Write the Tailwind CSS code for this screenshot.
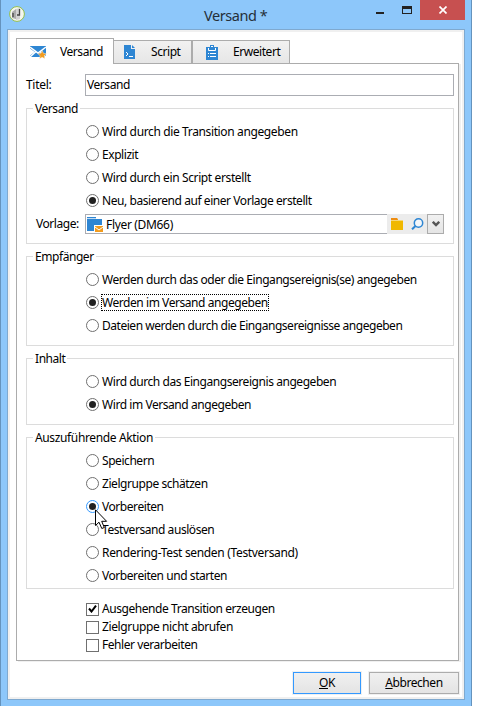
<!DOCTYPE html>
<html lang="de">
<head>
<meta charset="utf-8">
<title>Versand</title>
<script src="https://cdn.jsdelivr.net/npm/@tailwindcss/browser@4"></script>
</head>
<body class="h-[706px] w-[488px] overflow-hidden bg-white font-['Noto_Sans','Open_Sans',sans-serif] text-[12px] leading-[16px] tracking-[-0.44px] text-black">
<div class="flex h-[706px] w-[472px] flex-col border-x border-[#6593bd] bg-[#8dc7fa] pr-[6px] pl-[6px]">
  <header class="flex h-[29px] shrink-0">
    <svg class="mt-[6px] ml-[2px] size-4 shrink-0" viewBox="0 0 16 16"><circle cx="8" cy="8" r="7.4" fill="#f4f6ef" stroke="#93bd4b"/><path d="M3 6l4-3v10l-4-1z" fill="#aaa"/><path d="M7 3l4-1v11l-4 1z" fill="#d2d2d2"/><path d="M10.500 3v6H8M4 7v4" stroke="#444" stroke-width="1.300" fill="none"/></svg>
    <h1 class="mt-[5px] ml-[179px] w-[72px] text-[14.500px] leading-[20px] whitespace-nowrap text-[#252f38]">Versand *</h1>
    <svg class="ml-[96px] h-5 w-[56px] shrink-0" viewBox="0 0 56 20" shape-rendering="crispEdges"><path d="M4 12h8v2H4z" fill="#222"/><path d="M30 6h10v3H30zM30 6h1v8h-1zM39 6h1v8h-1zM30 13h10v1H30z" fill="#222"/></svg>
    <div class="-ml-[8px] flex h-5 w-[45px] shrink-0 items-center justify-center bg-[#c75050]"><svg class="h-[8px] w-[8px]" viewBox="0 0 8 8"><path d="M.5 .5l7 7M7.500 .5l-7 7" stroke="#fff" stroke-width="1.700"/></svg></div>
  </header>
  <main class="flex h-[671px] w-[458px] shrink-0 flex-col border border-[#7fa9cf] bg-white p-[6px] pt-[8px] pl-[8px] shadow-[inset_0_0_0_2px_#f0f0f0]">
    <nav class="flex h-[25px] items-end">
      <div class="relative z-10 -mb-px flex h-[26px] w-[98px] items-center border border-b-0 border-[#acacac] bg-white pl-[13px]">
        <svg class="h-[14px] w-[17px]" viewBox="0 0 17 14"><path d="M0 1h16v11H0z" fill="#2e86d3"/><path d="M0 2l8 6 8-6M0 12l5.500-5M16 12l-5.500-5" stroke="#fff" stroke-width="1.500" fill="none"/><path d="M0 3.500v7L4.800 7z" fill="#fff"/><path d="M12.200 5.500l1.300 2.800 3 .4-2.200 2 .6 3-2.700-1.400-2.700 1.400.6-3-2.200-2 3-.4z" fill="#f29b1d" stroke="#fff" stroke-width=".4"/></svg>
        <span class="ml-[13px]">Versand</span>
      </div>
      <div class="flex h-[23px] w-[78px] items-center border border-l-0 border-b-0 border-[#acacac] bg-linear-to-b from-[#f1f1f1] to-[#e6e6e6] pl-[10px]">
        <svg class="h-[14px] w-[12px]" viewBox="0 0 12 14"><path d="M0 0h7v4h4v10H0z" fill="#2e86d3"/><path d="M8 0l3 3H8z" fill="#2e86d3"/><path d="M2 7l2 2-2 2M5 11.500h4" stroke="#fff" fill="none"/></svg>
        <span class="ml-[15px]">Script</span>
      </div>
      <div class="flex h-[23px] w-[98px] items-center border border-b-0 border-[#acacac] bg-linear-to-b from-[#f1f1f1] to-[#e6e6e6] pl-[13px]">
        <svg class="h-[15px] w-[12px]" viewBox="0 0 12 15"><path d="M0 2h12v13H0z" fill="#2e86d3"/><path d="M4 0h4v2h1v3H3V2h1z" fill="#2e86d3"/><path d="M2.500 3v2.500h7V3" stroke="#fff" fill="none"/><path d="M5 1.500h2" stroke="#fff"/><path d="M2 8.500h1M4 8.500h6M2 11.500h1M4 11.500h6" stroke="#fff"/></svg>
        <span class="ml-[15px]">Erweitert</span>
      </div>
    </nav>
    <section class="h-[598px] w-[443px] shrink-0 border border-[#acacac] pt-[10px] pl-[9px] shadow-[2px_1px_0_#f0f0f0]">
      <div class="flex h-[22px] w-[428px] items-center"><label class="w-[59px] tracking-[-0.3px]">Titel:</label><div class="h-[22px] w-[369px] border border-[#abadb3] pt-[1px] pl-[1px] leading-[17px]">Versand</div></div>

      <fieldset class="mt-[4px] h-[144px] w-[428px] border border-[#dcdcdc] pl-[59px]">
        <legend class="-ml-[53px] h-[17px] px-[2px] leading-[18px]">Versand</legend>
        <div class="mt-[3px] flex h-[23px] items-center gap-[3px]"><i class="size-[13px] rounded-full border border-[#707070]"></i><span class="tracking-[-0.37px]">Wird durch die Transition angegeben</span></div>
        <div class="flex h-[23px] items-center gap-[3px]"><i class="size-[13px] rounded-full border border-[#707070]"></i><span>Explizit</span></div>
        <div class="flex h-[23px] items-center gap-[3px]"><i class="size-[13px] rounded-full border border-[#707070]"></i><span class="tracking-[-0.38px]">Wird durch ein Script erstellt</span></div>
        <div class="flex h-[23px] items-center gap-[3px]"><i class="flex size-[13px] items-center justify-center rounded-full border border-[#707070]"><b class="size-[7px] rounded-full bg-[#212121]"></b></i><span>Neu, basierend auf einer Vorlage erstellt</span></div>
        <div class="mt-[2px] -ml-[50px] flex h-[20px] items-center"><label class="w-[49px]">Vorlage:</label>
          <div class="flex h-[20px] w-[302px] items-center border border-r-0 border-[#abadb3] pl-[1px]"><svg class="h-[16px] w-[17px]" viewBox="0 0 17 16"><path d="M0 1h9v2h6v12H0z" fill="#2e86d3"/><path d="M0 2.500h9" stroke="#fff" stroke-width=".7"/><path d="M7 9h10v7H7z" fill="#fff"/><path d="M8 10h8v6H8z" fill="#f29b1d"/><path d="M8 11l4 3 4-3" stroke="#fff" fill="none"/></svg><span class="ml-[2px] pt-px tracking-[-0.33px]">Flyer (DM66)</span></div>
          <div class="flex h-[20px] w-[40px] items-center bg-[#ececec] pl-[4px]"><svg class="h-[12px] w-[12px]" viewBox="0 0 12 12"><path d="M0 0h6l1 2h5v10H0z" fill="#f0b800"/><path d="M0 0h6l1 2H0z" fill="#ee8d13"/><path d="M0 2.500h12" stroke="#f6d878"/></svg><svg class="ml-[8px] h-[12px] w-[13px]" viewBox="0 0 13 12"><circle cx="7.500" cy="5" r="4.200" fill="#f4f7fa" stroke="#2e86d3" stroke-width="1.500"/><path d="M4.500 8L1 11.300" stroke="#2e86d3" stroke-width="2"/></svg></div>
          <div class="flex h-[20px] w-[17px] items-center justify-center border border-[#acacac] bg-linear-to-b from-[#f1f1f1] to-[#e5e5e5]"><svg class="h-[6px] w-[8px]" viewBox="0 0 8 6"><path d="M.8 .8L4 4l3.200-3.200" stroke="#555" stroke-width="2.400" fill="none"/></svg></div>
        </div>
      </fieldset>

      <fieldset class="mt-[4px] h-[98px] w-[428px] border border-[#dcdcdc] pl-[59px]">
        <legend class="-ml-[53px] h-[17px] px-[2px] leading-[18px]">Empfänger</legend>
        <div class="mt-[3px] flex h-[23px] items-center gap-[3px]"><i class="size-[13px] rounded-full border border-[#707070]"></i><span>Werden durch das oder die Eingangsereignis(se) angegeben</span></div>
        <div class="flex h-[23px] items-center gap-[3px]"><i class="flex size-[13px] items-center justify-center rounded-full border border-[#707070]"><b class="size-[7px] rounded-full bg-[#212121]"></b></i><span class="-mx-px border border-dotted border-black leading-[15px]">Werden im Versand angegeben</span></div>
        <div class="flex h-[23px] items-center gap-[3px]"><i class="size-[13px] rounded-full border border-[#707070]"></i><span class="tracking-[-0.47px]">Dateien werden durch die Eingangsereignisse angegeben</span></div>
      </fieldset>

      <fieldset class="mt-[4px] h-[75px] w-[428px] border border-[#dcdcdc] pl-[59px]">
        <legend class="-ml-[53px] h-[17px] px-[2px] leading-[18px]">Inhalt</legend>
        <div class="mt-[3px] flex h-[23px] items-center gap-[3px]"><i class="size-[13px] rounded-full border border-[#707070]"></i><span>Wird durch das Eingangsereignis angegeben</span></div>
        <div class="flex h-[23px] items-center gap-[3px]"><i class="flex size-[13px] items-center justify-center rounded-full border border-[#707070]"><b class="size-[7px] rounded-full bg-[#212121]"></b></i><span>Wird im Versand angegeben</span></div>
      </fieldset>

      <fieldset class="mt-[4px] h-[160px] w-[428px] border border-[#dcdcdc] pl-[59px]">
        <legend class="-ml-[53px] h-[17px] px-[2px] leading-[18px] tracking-[-0.36px]">Auszuführende Aktion</legend>
        <div class="mt-[3px] flex h-[23px] items-center gap-[3px]"><i class="size-[13px] rounded-full border border-[#707070]"></i><span>Speichern</span></div>
        <div class="flex h-[23px] items-center gap-[3px]"><i class="size-[13px] rounded-full border border-[#707070]"></i><span>Zielgruppe schätzen</span></div>
        <div class="relative z-10 flex h-[23px] items-center gap-[3px]"><i class="flex size-[13px] items-center justify-center rounded-full border border-[#3399ff]"><b class="size-[7px] rounded-full bg-[#212121]"></b></i><span>Vorbereiten</span>
          <svg class="absolute top-[14px] left-[9px] h-[21px] w-[13px]" viewBox="0 0 13 21"><path d="M.5 .8v15.700l3.500-3.300 2.800 6.300 2.500-1-2.600-6.200h4.900z" fill="#fff" stroke="#000"/></svg></div>
        <div class="flex h-[23px] items-center gap-[3px]"><i class="size-[13px] rounded-full border border-[#707070]"></i><span>Testversand auslösen</span></div>
        <div class="flex h-[23px] items-center gap-[3px]"><i class="size-[13px] rounded-full border border-[#707070]"></i><span class="tracking-[-0.33px]">Rendering-Test senden (Testversand)</span></div>
        <div class="flex h-[23px] items-center gap-[3px]"><i class="size-[13px] rounded-full border border-[#707070]"></i><span>Vorbereiten und starten</span></div>
      </fieldset>

      <div class="mt-[11px] pl-[60px]">
        <div class="flex h-[18px] items-center gap-[3px]"><i class="flex size-[13px] items-center justify-center border border-[#707070]"><svg class="h-[8px] w-[9px]" viewBox="0 0 9 8"><path d="M1 3.500l2.500 3L8 .7" stroke="#000" stroke-width="2" fill="none"/></svg></i><span>Ausgehende Transition erzeugen</span></div>
        <div class="flex h-[18px] items-center gap-[3px]"><i class="size-[13px] border border-[#707070]"></i><span class="tracking-[-0.38px]">Zielgruppe nicht abrufen</span></div>
        <div class="flex h-[18px] items-center gap-[3px]"><i class="size-[13px] border border-[#707070]"></i><span>Fehler verarbeiten</span></div>
      </div>
    </section>
    <footer class="mt-[11px] flex gap-[8px] pl-[277px]">
      <div class="flex h-[22px] w-[68px] shrink-0 items-center justify-center border border-[#3399ff] bg-linear-to-b from-[#f0f0f0] to-[#e4e4e4] shadow-[0_0_0_1px_#f0f0f0]"><span><u>O</u>K</span></div>
      <div class="flex h-[22px] w-[90px] shrink-0 items-center justify-center border border-[#acacac] bg-linear-to-b from-[#f0f0f0] to-[#e4e4e4] shadow-[0_0_0_1px_#f0f0f0]"><span><u>A</u>bbrechen</span></div>
    </footer>
  </main>
</div>
</body>
</html>
